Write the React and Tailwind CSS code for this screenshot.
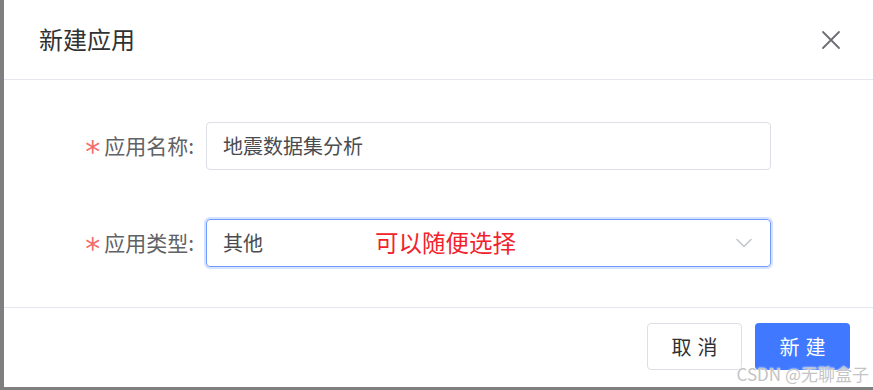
import React from 'react';

const FONT = { fontFamily: '"Microsoft YaHei", "Noto Sans CJK SC", "Noto Sans", sans-serif' };

function CloseIcon() {
  return (
    <svg width="20" height="20" viewBox="0 0 20 20" fill="none">
      <path d="M2 2 L18 18 M18 2 L2 18" stroke="#6b6d72" strokeWidth="1.8" strokeLinecap="round" />
    </svg>
  );
}

function Chevron() {
  return (
    <svg width="16" height="10" viewBox="0 0 16 10" fill="none">
      <path d="M1 1.5 L8 8.5 L15 1.5" stroke="#c0c4cc" strokeWidth="1.5" strokeLinecap="round" strokeLinejoin="round" />
    </svg>
  );
}

function FormRow({ label, children }) {
  return (
    <div className="flex items-center">
      <label className="w-[202px] pr-[12px] flex justify-end items-center text-[21px] text-[#606266]">
        <span className="text-[#f56c6c] text-[30px] leading-none translate-y-[6px] mr-[4px]" style={{ fontFamily: '"DejaVu Sans", sans-serif' }}>*</span>
        {label}:
      </label>
      {children}
    </div>
  );
}

export default function App() {
  return (
    <div className="w-[873px] h-[390px] bg-[#7f7f7f] flex pl-[4px] pb-[3px] overflow-hidden" style={FONT}>
      <div className="relative flex-1 bg-white flex flex-col">
        <div className="h-[80px] flex items-center justify-between pl-[35px] pr-[32px] border-b border-[#e4e7ed]">
          <h2 className="text-[24px] text-[#303133] pb-[2px]">新建应用</h2>
          <CloseIcon />
        </div>

        <div className="flex flex-col gap-[49px] pt-[42px] pb-[40px]">
          <FormRow label="应用名称">
            <div className="w-[565px] h-[48px] border border-[#dcdfe6] rounded-[4px] flex items-center px-[16px] text-[20px] text-[#4a4c50]">
              地震数据集分析
            </div>
          </FormRow>
          <FormRow label="应用类型">
            <div className="w-[565px] h-[48px] border border-[#6f9bff] rounded-[4px] ring-2 ring-[#d6e2ff] flex items-center px-[16px] text-[20px] text-[#4a4c50]">
              <span className="w-[152px]">其他</span>
              <span className="text-[23.5px] text-[#f2222c]">可以随便选择</span>
              <span className="ml-auto mr-[2px] flex items-center"><Chevron /></span>
            </div>
          </FormRow>
        </div>

        <div className="border-t border-[#e4e7ed] flex justify-end gap-[13px] pt-[15px] pr-[23px]">
          <button className="w-[95px] h-[47px] border border-[#dcdfe6] rounded-[4px] bg-white text-[20px] text-[#303133] tracking-[6px] pl-[6px]">取消</button>
          <button className="w-[95px] h-[47px] rounded-[4px] bg-[#4079ff] text-[20px] text-white tracking-[6px] pl-[6px]">新建</button>
        </div>

        <div
          className="absolute right-[4px] bottom-[1px] text-[17px] text-[#c4c4c4]"
          style={{ textShadow: '0 0 2px #fff, 0 0 2px #fff' }}
        >
          CSDN @无聊盒子
        </div>
      </div>
    </div>
  );
}
